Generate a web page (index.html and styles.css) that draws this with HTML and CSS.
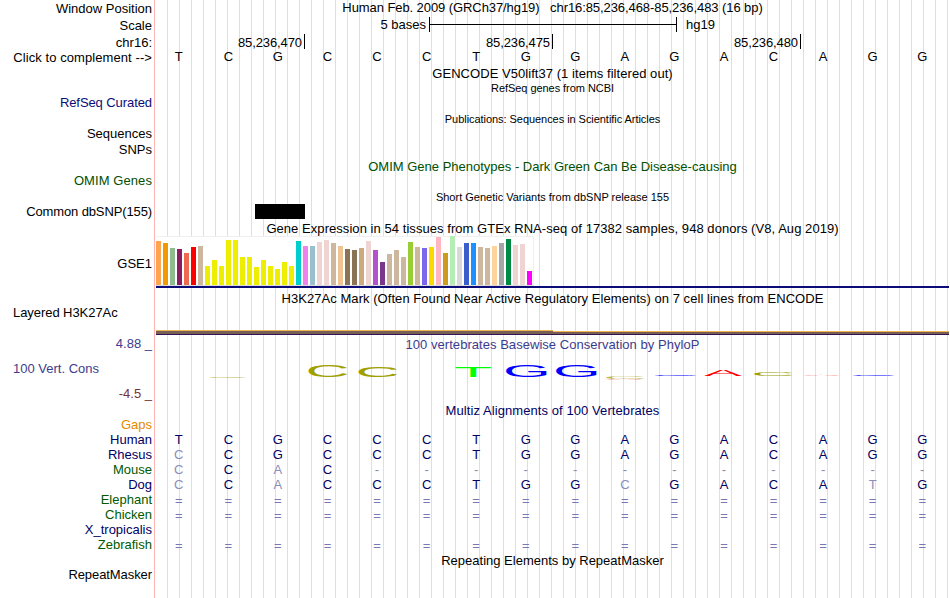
FILE: index.html
```html
<!DOCTYPE html>
<html lang="en">
<head>
    <meta charset="UTF-8">
    <meta name="viewport" content="width=device-width, initial-scale=1.0">
    <title>Human hg19 chr16:85,236,468-85,236,483</title>
    <link rel="stylesheet" href="styles.css">
</head>
<body>

    <!-- Side labels -->
    <div class="labels">
        <div class="label position-label">Window Position</div>
        <div class="label ruler-label">Scale</div>
        <div class="label ruler-label">chr16:</div>
        <div class="label complement-label">Click to complement --&gt;</div>
        <div class="label refseq-label">RefSeq Curated</div>
        <div class="label pubs-label">Sequences</div>
        <div class="label snps-label">SNPs</div>
        <div class="label omim-label">OMIM Genes</div>
        <div class="label dbsnp-label">Common dbSNP(155)</div>
        <div class="label gtex-label">GSE1</div>
        <div class="label left h3k-label">Layered H3K27Ac</div>
        <div class="label cons-max">4.88 _</div>
        <div class="label left cons-label">100 Vert. Cons</div>
        <div class="label cons-min">-4.5 _</div>
        <div class="label gaps-label">Gaps</div>
        <div class="label navy">Human</div>
        <div class="label navy">Rhesus</div>
        <div class="label green">Mouse</div>
        <div class="label navy">Dog</div>
        <div class="label green">Elephant</div>
        <div class="label green">Chicken</div>
        <div class="label navy">X_tropicalis</div>
        <div class="label green">Zebrafish</div>
        <div class="label rmsk-label">RepeatMasker</div>
    </div>

    <!-- Tracks -->
    <div class="tracks">
        <div class="title window-title">Human Feb. 2009 (GRCh37/hg19)&nbsp;&nbsp; chr16:85,236,468-85,236,483 (16 bp)</div>
        <div class="scale">
            <span class="scale-text">5 bases</span>
            <span class="scale-bar"><span class="scale-line"></span></span>
            <span>hg19</span>
        </div>
        <div class="ticks">
            <span>85,236,470</span>
            <span>85,236,475</span>
            <span>85,236,480</span>
        </div>
        <div class="bases">
            <span>T</span><span>C</span><span>G</span><span>C</span><span>C</span><span>C</span><span>T</span><span>G</span><span>G</span><span>A</span><span>G</span><span>A</span><span>C</span><span>A</span><span>G</span><span>G</span>
        </div>

        <div class="title gencode-title">GENCODE V50lift37 (1 items filtered out)</div>
        <div class="title small refseq-title">RefSeq genes from NCBI</div>
        <div class="title small pubs-title">Publications: Sequences in Scientific Articles</div>
        <div class="title omim-title">OMIM Gene Phenotypes - Dark Green Can Be Disease-causing</div>
        <div class="title small dbsnp-title">Short Genetic Variants from dbSNP release 155</div>
        <div class="snp"></div>

        <!-- GTEx expression -->
        <div class="title gtex-title">Gene Expression in 54 tissues from GTEx RNA-seq of 17382 samples, 948 donors (V8, Aug 2019)</div>
        <div class="gtex">
            <i class="adipose" style="height:44px"></i>
            <i class="visceral" style="height:42px"></i>
            <i class="adrenal" style="height:37px"></i>
            <i class="aorta" style="height:36px"></i>
            <i class="coronary" style="height:32px"></i>
            <i class="tibial" style="height:38px"></i>
            <i class="tan" style="height:39px"></i>
            <i class="brain" style="height:19px"></i>
            <i class="brain" style="height:25px"></i>
            <i class="brain" style="height:19px"></i>
            <i class="brain" style="height:45px"></i>
            <i class="brain" style="height:45px"></i>
            <i class="brain" style="height:28px"></i>
            <i class="brain" style="height:28px"></i>
            <i class="brain" style="height:18px"></i>
            <i class="brain" style="height:25px"></i>
            <i class="brain" style="height:19px"></i>
            <i class="brain" style="height:16px"></i>
            <i class="brain" style="height:23px"></i>
            <i class="brain" style="height:19px"></i>
            <i class="breast" style="height:44px"></i>
            <i class="lymphocytes" style="height:39px"></i>
            <i class="fibroblasts" style="height:39px"></i>
            <i class="rose" style="height:43px"></i>
            <i class="rose" style="height:45px"></i>
            <i class="tan" style="height:42px"></i>
            <i class="colon" style="height:39px"></i>
            <i class="esophagus" style="height:36px"></i>
            <i class="esophagus" style="height:35px"></i>
            <i class="muscularis" style="height:37px"></i>
            <i class="rose" style="height:44px"></i>
            <i class="atrium" style="height:35px"></i>
            <i class="ventricle" style="height:23px"></i>
            <i class="tan" style="height:31px"></i>
            <i class="tan" style="height:35px"></i>
            <i class="tan" style="height:28px"></i>
            <i class="lung" style="height:43px"></i>
            <i class="tan" style="height:38px"></i>
            <i class="muscle" style="height:37px"></i>
            <i class="nerve" style="height:38px"></i>
            <i class="ovary" style="height:48px"></i>
            <i class="pancreas" style="height:32px"></i>
            <i class="pituitary" style="height:49px"></i>
            <i class="prostate" style="height:38px"></i>
            <i class="skin" style="height:42px"></i>
            <i class="skin-exposed" style="height:42px"></i>
            <i class="tan" style="height:38px"></i>
            <i class="tan" style="height:37px"></i>
            <i class="stomach" style="height:39px"></i>
            <i class="testis" style="height:42px"></i>
            <i class="thyroid" style="height:46px"></i>
            <i class="rose" style="height:40px"></i>
            <i class="rose" style="height:41px"></i>
            <i class="blood" style="height:14px"></i>
        </div>
        <div class="gene-model"></div>

        <!-- H3K27Ac -->
        <div class="title h3k-title">H3K27Ac Mark (Often Found Near Active Regulatory Elements) on 7 cell lines from ENCODE</div>
        <div class="h3k">
            <div class="h3k-high"></div>
            <div class="h3k-low"></div>
        </div>

        <!-- PhyloP conservation -->
        <div class="title cons-title">100 vertebrates Basewise Conservation by PhyloP</div>
        <svg class="logo" width="793" height="20" viewBox="0 0 793 20">
            <text class="c faint" transform="translate(50 16.8) scale(6 .12)">C</text>
            <text class="c" transform="translate(149.4 15.8) scale(6.1 1.66)">C</text>
            <text class="c" transform="translate(199.4 15.8) scale(6.1 1.52)">C</text>
            <text class="t" transform="translate(298 16) scale(6.3 1.52)">T</text>
            <text class="g" transform="translate(347 15.8) scale(6.15 1.74)">G</text>
            <text class="g" transform="translate(397 15.8) scale(6.15 1.74)">G</text>
            <text class="c faint" transform="translate(447 18.4) scale(6 .3)">C</text>
            <text class="a faint" transform="translate(449.5 18.8) scale(5.7 .1)">A</text>
            <text class="g" transform="translate(496 14.8) scale(6.2 .2)">G</text>
            <text class="a" transform="translate(548 15) scale(5.7 .84)">A</text>
            <text class="c" transform="translate(595 15) scale(6.1 .52)">C</text>
            <text class="a faint" transform="translate(647 15) scale(5.6 .12)">A</text>
            <text class="g" transform="translate(694 14.8) scale(6.2 .2)">G</text>
        </svg>

        <!-- Multiz alignments -->
        <div class="title multiz-title">Multiz Alignments of 100 Vertebrates</div>
        <div class="alignments">
            <div class="bases">
                <span>T</span><span>C</span><span>G</span><span>C</span><span>C</span><span>C</span><span>T</span><span>G</span><span>G</span><span>A</span><span>G</span><span>A</span><span>C</span><span>A</span><span>G</span><span>G</span>
            </div>
            <div class="bases">
                <span class="diff">C</span><span>C</span><span>G</span><span>C</span><span>C</span><span>C</span><span>T</span><span>G</span><span>G</span><span>A</span><span>G</span><span>A</span><span>C</span><span>A</span><span>G</span><span>G</span>
            </div>
            <div class="bases">
                <span class="diff">C</span><span>C</span><span class="diff">A</span><span>C</span><span class="gap">-</span><span class="gap">-</span><span class="gap">-</span><span class="gap">-</span><span class="gap">-</span><span class="gap">-</span><span class="gap">-</span><span class="gap">-</span><span class="gap">-</span><span class="gap">-</span><span class="gap">-</span><span class="gap">-</span>
            </div>
            <div class="bases">
                <span class="diff">C</span><span>C</span><span class="diff">A</span><span>C</span><span>C</span><span>C</span><span>T</span><span>G</span><span>G</span><span class="diff">C</span><span>G</span><span>A</span><span>C</span><span>A</span><span class="diff">T</span><span>G</span>
            </div>
            <div class="bases unaligned">
                <span>=</span><span>=</span><span>=</span><span>=</span><span>=</span><span>=</span><span>=</span><span>=</span><span>=</span><span>=</span><span>=</span><span>=</span><span>=</span><span>=</span><span>=</span><span>=</span>
            </div>
            <div class="bases unaligned">
                <span>=</span><span>=</span><span>=</span><span>=</span><span>=</span><span>=</span><span>=</span><span>=</span><span>=</span><span>=</span><span>=</span><span>=</span><span>=</span><span>=</span><span>=</span><span>=</span>
            </div>
            <div class="bases"></div>
            <div class="bases unaligned">
                <span>=</span><span>=</span><span>=</span><span>=</span><span>=</span><span>=</span><span>=</span><span>=</span><span>=</span><span>=</span><span>=</span><span>=</span><span>=</span><span>=</span><span>=</span><span>=</span>
            </div>
        </div>

        <div class="title rmsk-title">Repeating Elements by RepeatMasker</div>
    </div>

</body>
</html>
```

FILE: styles.css
```css
* {
    margin: 0;
    padding: 0;
    box-sizing: border-box;
}

body {
    display: flex;
    width: 950px;
    height: 598px;
    overflow: hidden;
    background-color: #ffffff;
    color: #000000;
    font-family: "Liberation Sans", Arial, sans-serif;
    font-size: 13px;
    line-height: 15px;
    white-space: nowrap;
}

/* Side labels */
.labels {
    width: 155px;
    height: 598px;
    padding-top: 1px;
    padding-right: 2px;
    border-right: 1px solid #ffb4b4;
    text-align: right;
}

.label {
    height: 15px;
}

.left {
    text-align: left;
    padding-left: 13px;
}

.ruler-label {
    margin-top: 2px;
}

.complement-label {
    letter-spacing: 0.08px;
}

.refseq-label {
    margin-top: 30px;
    color: #0c0c78;
    letter-spacing: -0.08px;
}

.pubs-label {
    margin-top: 16px;
}

.snps-label {
    margin-top: 1px;
}

.omim-label {
    margin-top: 16px;
    color: #005000;
    letter-spacing: 0.08px;
}

.dbsnp-label {
    margin-top: 16px;
    letter-spacing: -0.12px;
}

.gtex-label {
    margin-top: 37px;
}

.h3k-label {
    margin-top: 34px;
    letter-spacing: -0.06px;
}

.cons-max {
    margin-top: 16px;
    color: #3c3c8c;
}

.cons-label {
    margin-top: 10px;
    color: #3c3c8c;
}

.cons-min {
    margin-top: 10px;
    color: #783232;
}

.gaps-label {
    margin-top: 16px;
    color: #e68a00;
}

.navy {
    color: #000064;
}

.green {
    color: #005a00;
}

.rmsk-label {
    margin-top: 15px;
    letter-spacing: -0.08px;
}

/* Track area with vertical guidelines every 12px */
.tracks {
    width: 795px;
    height: 598px;
    padding: 0 1px;
    background-image:
        linear-gradient(#ffffff, #ffffff),
        repeating-linear-gradient(to right, #dcdcf5 0, #dcdcf5 1px, transparent 1px, transparent 12px);
    background-size: 1px 100%, 100% 100%;
    background-repeat: no-repeat;
}

.title {
    width: 793px;
    height: 15px;
    text-align: center;
}

.small {
    font-size: 11px;
    height: 13px;
    line-height: 13px;
}

.window-title {
    letter-spacing: -0.08px;
}

/* Ruler */
.scale {
    display: flex;
    height: 15px;
    margin-top: 2px;
}

.scale-text {
    width: 270px;
    text-align: right;
}

.scale-bar {
    display: flex;
    align-items: center;
    width: 248px;
    height: 15px;
    margin: 0 9px 0 3px;
    border-left: 1px solid #000000;
    border-right: 1px solid #000000;
}

.scale-line {
    width: 100%;
    height: 1px;
    background-color: #000000;
}

.ticks {
    display: grid;
    grid-template-columns: 149px 248px 248px;
    height: 15px;
    margin-top: 2px;
    line-height: 17px;
    letter-spacing: -0.1px;
    text-align: right;
}

.ticks span {
    height: 15px;
    padding-right: 2px;
    border-right: 1px solid #000000;
}

.bases {
    display: grid;
    grid-template-columns: repeat(16, 1fr);
    width: 793px;
    height: 15px;
    margin-left: -2px;
    text-align: center;
}

.gencode-title {
    margin-top: 2px;
    letter-spacing: 0.05px;
}

.refseq-title {
    margin-top: 1px;
    letter-spacing: -0.05px;
}

.pubs-title {
    margin-top: 18px;
    letter-spacing: -0.05px;
}

.omim-title {
    margin-top: 33px;
    color: #005000;
}

.dbsnp-title {
    margin-top: 17px;
}

.snp {
    width: 50px;
    height: 15px;
    margin-left: 99px;
    background-color: #000000;
}

/* Expression bars, one per tissue */
.gtex-title {
    margin-top: 2px;
    letter-spacing: 0.055px;
}

.gtex {
    display: flex;
    align-items: flex-end;
    gap: 2px;
    width: 378px;
    height: 50px;
    background-color: #ffffff;
    border: 1px solid #f0f0f0;
    border-left: none;
    border-bottom-color: #dcdcdc;
}

.gtex i {
    flex: none;
    width: 5px;
}

.adipose { background-color: #ffa54f; }
.visceral { background-color: #ee9a00; }
.adrenal { background-color: #8fbc8f; }
.aorta { background-color: #8b1c62; }
.coronary { background-color: #ee6a50; }
.tibial { background-color: #ff0000; }
.tan { background-color: #cdb79e; }
.brain { background-color: #eeee00; }
.breast { background-color: #00cdcd; }
.lymphocytes { background-color: #ee82ee; }
.fibroblasts { background-color: #9ac0cd; }
.rose { background-color: #eed5d2; }
.colon { background-color: #eec591; }
.esophagus { background-color: #8b7355; }
.muscularis { background-color: #cdaa7d; }
.atrium { background-color: #b452cd; }
.ventricle { background-color: #7a378b; }
.lung { background-color: #9acd32; }
.muscle { background-color: #7a67ee; }
.nerve { background-color: #ffd700; }
.ovary { background-color: #ffb6c1; }
.pancreas { background-color: #cd9b1d; }
.pituitary { background-color: #b4eeb4; }
.prostate { background-color: #d9d9d9; }
.skin { background-color: #3a5fcd; }
.skin-exposed { background-color: #1e90ff; }
.stomach { background-color: #ffd39b; }
.testis { background-color: #a6a6a6; }
.thyroid { background-color: #008b45; }
.blood { background-color: #ff00ff; }

.gene-model {
    height: 2px;
    background-color: #0c0c78;
}

/* H3K27Ac signal */
.h3k-title {
    margin-top: 3px;
    letter-spacing: 0.05px;
}

.h3k {
    display: flex;
    align-items: flex-end;
    height: 5px;
    margin-top: 24px;
}

.h3k-high,
.h3k-low {
    background-color: #785f55;
    border-top: 1px solid #f0b450;
    border-bottom: 1px solid #321450;
}

.h3k-high {
    width: 397px;
    height: 5px;
}

.h3k-low {
    width: 396px;
    height: 4px;
}

/* Conservation logo */
.cons-title {
    margin-top: 2px;
    color: #3c3c8c;
    letter-spacing: 0.04px;
}

.logo {
    display: block;
    margin-top: 9px;
    font-size: 10px;
}

.logo .a { fill: #ff0000; }
.logo .c { fill: #a0a000; }
.logo .g { fill: #0000ff; }
.logo .t { fill: #00ff00; }
.logo .faint { opacity: 0.7; }

/* Alignments */
.multiz-title {
    margin-top: 22px;
    color: #000064;
    letter-spacing: 0.08px;
}

.alignments {
    margin-top: 14px;
    color: #000064;
}

.diff {
    color: #8c8cb9;
}

.gap {
    color: #8c8ca5;
}

.unaligned {
    padding-top: 1px;
    color: #7878b4;
}

.rmsk-title {
    margin-top: 1px;
}
```
